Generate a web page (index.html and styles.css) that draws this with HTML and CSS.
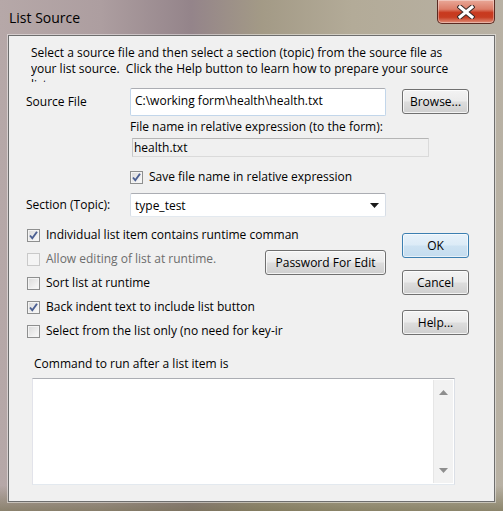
FILE: index.html
```html
<!DOCTYPE html>
<html>
<head>
<meta charset="utf-8">
<title>List Source</title>
<link rel="stylesheet" href="styles.css">
</head>
<body>
<div class="window">
  <div class="titlebar">
    <span class="title">List Source</span>
    <div class="close">
      <svg width="18" height="14" viewBox="0 0 18 14">
        <path d="M3 2 L15 12 M15 2 L3 12" stroke="#3b2a28" stroke-width="5" stroke-linecap="square"/>
        <path d="M3 2 L15 12 M15 2 L3 12" stroke="#ffffff" stroke-width="3" stroke-linecap="square"/>
      </svg>
    </div>
  </div>
  <div class="client">
    <p class="intro">Select a source file and then select a section (topic) from the source file as your list source.&nbsp; Click the Help button to learn how to prepare your source list.</p>

    <div class="source-row">
      <span class="field-label">Source File</span>
      <div class="textbox source-input">C:\working form\health\health.txt</div>
      <div class="btn browse">Browse...</div>
    </div>

    <div class="rel-label">File name in relative expression (to the form):</div>
    <div class="rel-box">health.txt</div>

    <div class="chk save-chk">
      <span class="box checked"><svg width="11" height="11" viewBox="0 0 11 11"><path d="M2 5.5 L4.3 8.3 L9 1.8" fill="none" stroke="#4b5f92" stroke-width="1.9"/></svg></span>
      <span class="chk-text">Save file name in relative expression</span>
    </div>

    <div class="section-row">
      <span class="field-label">Section (Topic):</span>
      <div class="combo">
        <span>type_test</span>
        <svg width="9" height="5" viewBox="0 0 9 5"><path d="M0 0 L9 0 L4.5 5 Z" fill="#1a1a1a"/></svg>
      </div>
    </div>

    <div class="options">
      <div class="checklist">
        <div class="chk row">
          <span class="box checked"><svg width="11" height="11" viewBox="0 0 11 11"><path d="M2 5.5 L4.3 8.3 L9 1.8" fill="none" stroke="#4b5f92" stroke-width="1.9"/></svg></span>
          <span class="chk-text">Individual list item contains runtime comman</span>
        </div>
        <div class="chk row">
          <span class="box disabled"></span>
          <span class="chk-text dim">Allow editing of list at runtime.</span>
          <div class="btn password">Password For Edit</div>
        </div>
        <div class="chk row">
          <span class="box"></span>
          <span class="chk-text">Sort list at runtime</span>
        </div>
        <div class="chk row">
          <span class="box checked"><svg width="11" height="11" viewBox="0 0 11 11"><path d="M2 5.5 L4.3 8.3 L9 1.8" fill="none" stroke="#4b5f92" stroke-width="1.9"/></svg></span>
          <span class="chk-text">Back indent text to include list button</span>
        </div>
        <div class="chk row">
          <span class="box"></span>
          <span class="chk-text">Select from the list only (no need for key-ir</span>
        </div>
      </div>
      <div class="buttons">
        <div class="btn default">OK</div>
        <div class="btn cancel">Cancel</div>
        <div class="btn help">Help...</div>
      </div>
    </div>

    <div class="cmd-label">Command to run after a list item is</div>
    <div class="cmd-box">
      <div class="scrollbar">
        <svg width="9" height="5" viewBox="0 0 9 5"><path d="M0 5 L4.5 0 L9 5 Z" fill="#8e8e8e"/></svg>
        <svg width="9" height="5" viewBox="0 0 9 5"><path d="M0 0 L9 0 L4.5 5 Z" fill="#8e8e8e"/></svg>
      </div>
    </div>
  </div>
</div>
</body>
</html>
```

FILE: styles.css
```css
* { box-sizing: border-box; }
html, body { margin: 0; padding: 0; }
body {
  width: 503px;
  height: 511px;
  overflow: hidden;
  font-family: "Open Sans", "Liberation Sans", sans-serif;
  font-size: 12px;
  color: #000;
}
.window {
  width: 503px;
  height: 511px;
  display: flex;
  flex-direction: column;
  padding: 0 8px 9px;
  background:
    linear-gradient(to bottom, rgba(255,255,255,0) 0%, rgba(255,255,255,0) 95%, rgba(110,104,70,0.6) 100%),
    linear-gradient(to right, #b6a8a8 0%, #ad9ea0 20%, #94848a 38%, #a39a86 52%, #b3ab98 70%, #b8b1a4 100%);
}
.titlebar {
  height: 35px;
  flex: none;
  display: flex;
  justify-content: space-between;
  align-items: flex-start;
}
.title {
  margin: 8px 0 0 1px;
  font-size: 14px;
  color: #000;
  line-height: 20px;
}
.close {
  width: 58px;
  height: 24px;
  border: 1px solid #5a2a22;
  border-top: none;
  border-radius: 0 0 5px 5px;
  background: linear-gradient(to bottom, #e9a898 0%, #dc7d68 40%, #c8391e 55%, #c73d22 75%, #e0907a 100%);
  box-shadow: inset 0 0 0 1px rgba(255,255,255,0.35);
  display: flex;
  align-items: center;
  justify-content: center;
}
.client {
  flex: 1;
  background: #f0f0f0;
  border: 1px solid #6e6e6e;
  box-shadow: 0 0 0 1px rgba(255,255,255,0.45);
}
.intro {
  margin: 9px 0 0 22px;
  width: 420px;
  height: 37px;
  overflow: hidden;
  line-height: 16px;
}
.source-row {
  margin-top: 6px;
  display: flex;
  align-items: flex-start;
  padding-left: 17px;
}
.field-label {
  width: 104px;
  flex: none;
  line-height: 28px;
}
.textbox {
  background: #fff;
  border: 1px solid;
  border-color: #abadb3 #c2d6ea #c2d6ea #c2d6ea;
  border-radius: 2px;
}
.source-input {
  width: 256px;
  height: 28px;
  padding: 4px 0 0 4px;
  line-height: 16px;
}
.btn {
  display: flex;
  align-items: center;
  justify-content: center;
  border: 1px solid #707070;
  border-radius: 3px;
  background: linear-gradient(to bottom, #f3f3f3 0%, #ebebeb 48%, #dddddd 52%, #cfcfcf 100%);
  box-shadow: inset 0 0 0 1px rgba(255,255,255,0.75);
  height: 25px;
  width: 67px;
}
.browse {
  margin: 1px 0 0 16px;
}
.rel-label {
  margin: 3px 0 0 121px;
  line-height: 16px;
}
.rel-box {
  margin: 3px 0 0 123px;
  width: 297px;
  height: 19px;
  border: 1px solid;
  border-color: #b5b5b5 #dadada #dadada #c8c8c8;
  background: #f0f0f0;
  padding-left: 1px;
  line-height: 17px;
}
.chk {
  display: flex;
  align-items: center;
}
.box {
  width: 13px;
  height: 13px;
  flex: none;
  border: 1px solid #8e8f8f;
  background: linear-gradient(135deg, #d9d9d9 0%, #eeeeee 60%, #fbfbfb 100%);
  box-shadow: inset 0 0 0 1px #f4f4f4;
  display: flex;
  align-items: center;
  justify-content: center;
}
.box.disabled {
  border-color: #c9c9c9;
  background: #f4f4f4;
}
.chk-text {
  margin-left: 6px;
  white-space: nowrap;
  line-height: 16px;
}
.dim { color: #6d6d6d; }
.save-chk {
  margin: 12px 0 0 121px;
  height: 16px;
}
.section-row {
  margin-top: 8px;
  display: flex;
  align-items: center;
  padding-left: 17px;
}
.section-row .field-label {
  line-height: 24px;
}
.combo {
  width: 256px;
  height: 24px;
  background: #fff;
  border: 1px solid;
  border-color: #abadb3 #d6dde6 #e3e9ef #d6dde6;
  border-radius: 2px;
  display: flex;
  align-items: center;
  justify-content: space-between;
  padding: 0 6px 0 4px;
}
.options {
  margin-top: 6px;
  display: flex;
  align-items: flex-start;
}
.checklist {
  margin-left: 18px;
  width: 359px;
}
.row {
  height: 24px;
}
.password {
  margin-left: auto;
  width: 121px;
  margin-top: 3px;
  align-self: flex-start;
}
.buttons {
  margin: 10px 0 0 16px;
  display: flex;
  flex-direction: column;
}
.btn.default {
  border-color: #3c7fb1;
  background: linear-gradient(to bottom, #e8f2fa 0%, #dcebf7 48%, #cde2f2 52%, #c4dcef 100%);
  box-shadow: inset 0 0 0 1px rgba(255,255,255,0.6);
}
.cancel { margin-top: 12px; }
.help { margin-top: 15px; }
.cmd-label {
  margin: 13px 0 0 25px;
  line-height: 16px;
}
.cmd-box {
  margin: 6px 0 0 23px;
  width: 423px;
  height: 107px;
  background: #fff;
  border: 1px solid;
  border-color: #abadb3 #dbdfe6 #e3e9ef #e2e3ea;
  display: flex;
  justify-content: flex-end;
  padding: 1px;
}
.scrollbar {
  width: 20px;
  height: 100%;
  background: #f2f2f2;
  border-left: 1px solid #e6e6e6;
  display: flex;
  flex-direction: column;
  align-items: center;
  justify-content: space-between;
  padding: 10px 0 10px;
}
```
